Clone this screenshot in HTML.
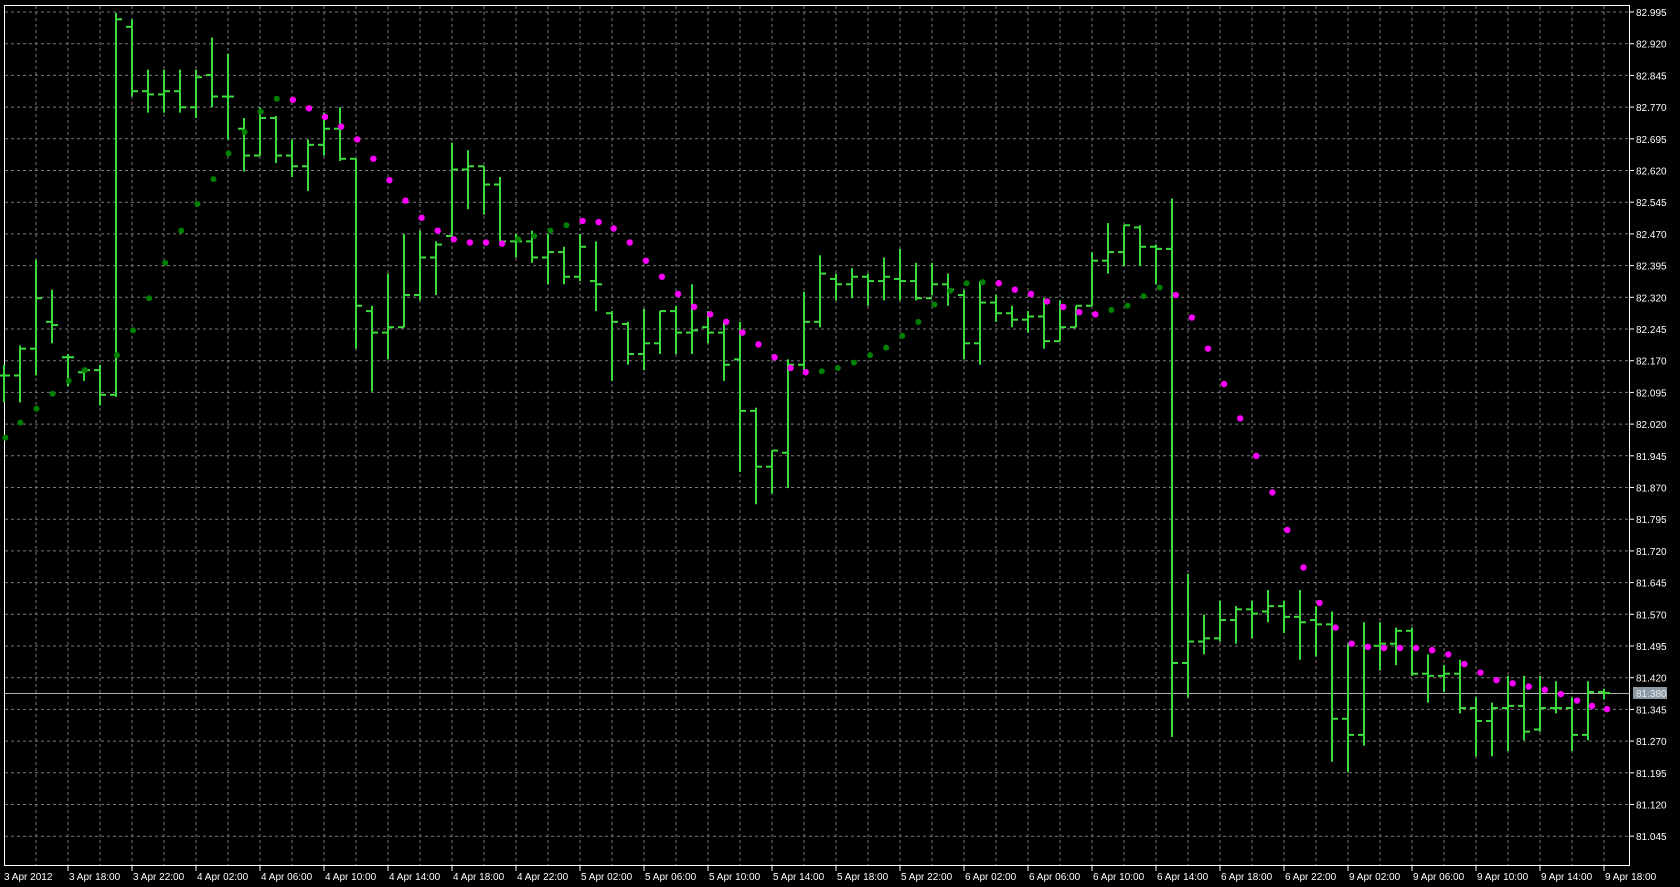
<!DOCTYPE html>
<html><head><meta charset="utf-8"><style>
html,body{margin:0;padding:0;background:#000;width:1680px;height:887px;overflow:hidden}
svg{display:block}
text{font-family:"Liberation Sans",sans-serif;font-size:10px;fill:#fff}
</style></head><body>
<svg id="c" width="1680" height="887" xmlns="http://www.w3.org/2000/svg"></svg>
<script>
var s=document.getElementById('c'),h='';
var K=1.0728;
// grid
for(var k=0;k<=26;k++){var y=12+31.7*k;h+='<line x1="5" y1="'+y+'" x2="1630" y2="'+y+'" stroke="#7a7a7a" stroke-dasharray="3,3"/>';
var p=(82.995-0.075*k).toFixed(3);h+='<line x1="1630" y1="'+y+'" x2="1634" y2="'+y+'" stroke="#fff"/><text x="1636" y="'+(y+4)+'">'+p+'</text>';}
for(var x=36;x<1630;x+=32){h+='<line x1="'+x+'" y1="6" x2="'+x+'" y2="866" stroke="#7a7a7a" stroke-dasharray="3,3"/>';}
var L=['3 Apr 18:00','3 Apr 22:00','4 Apr 02:00','4 Apr 06:00','4 Apr 10:00','4 Apr 14:00','4 Apr 18:00','4 Apr 22:00','5 Apr 02:00','5 Apr 06:00','5 Apr 10:00','5 Apr 14:00','5 Apr 18:00','5 Apr 22:00','6 Apr 02:00','6 Apr 06:00','6 Apr 10:00','6 Apr 14:00','6 Apr 18:00','6 Apr 22:00','9 Apr 02:00','9 Apr 06:00','9 Apr 10:00','9 Apr 14:00','9 Apr 18:00'];
h+='<text x="4" y="880">3 Apr 2012</text>';
for(var i=0;i<L.length;i++){var x=68+64*i;h+='<line x1="'+x+'" y1="866" x2="'+x+'" y2="871" stroke="#fff"/><text x="'+(x+1)+'" y="880">'+L[i]+'</text>';}
h+='<rect x="4.5" y="5.5" width="1625" height="860" fill="none" stroke="#fff"/>';
// price line
h+='<line x1="5" y1="693.5" x2="1630" y2="693.5" stroke="#b0b0b0"/><rect x="1633" y="687" width="34" height="12" fill="#8c9aa6"/><text x="1636" y="697" style="fill:#e8e8e8">81.380</text>';
var B=[[340,375,350,350],[322,375,350,325],[242,350,325,278],[270,320,300,303],[330,360,333,333],[345,355,347,345],[340,378,345,368],[12,370,368,18],[18,90,25,85],[65,105,85,88],[65,105,88,85],[65,105,85,100],[65,110,100,72],[35,100,70,90],[50,130,90,90],[110,160,120,145],[100,145,145,110],[108,152,110,145],[130,165,145,155],[130,178,155,135],[105,145,135,120],[100,150,120,148],[148,325,148,285],[285,365,290,310],[255,335,310,305],[218,305,305,275],[215,280,275,240],[225,275,240,228],[133,220,220,158],[140,195,158,155],[155,200,155,172],[165,225,172,225],[218,240,225,225],[215,245,225,240],[218,265,240,235],[230,265,235,258],[218,262,258,230],[225,290,262,265],[290,355,292,300],[300,340,302,330],[288,345,330,320],[290,330,320,290],[285,330,290,310],[265,330,310,308],[290,320,305,310],[300,355,310,340],[300,440,335,383],[380,470,383,435],[420,460,435,420],[335,455,422,340],[272,345,340,300],[238,305,300,255],[255,280,260,265],[250,278,265,258],[255,285,258,262],[240,280,262,258],[232,280,260,262],[245,280,262,278],[245,275,278,265],[255,285,265,270],[270,335,275,320],[262,340,320,282],[275,300,282,292],[285,305,292,298],[290,310,298,295],[278,325,295,318],[280,318,318,305],[285,305,305,285],[235,285,285,243],[208,255,243,235],[210,248,235,210],[210,248,212,230],[228,265,230,232],[185,687,232,618],[535,650,618,598],[573,610,598,595],[560,598,595,578],[565,600,578,568],[560,595,568,572],[550,580,570,565],[560,590,565,575],[550,615,575,580],[565,612,578,582],[570,710,582,670],[600,720,670,685],[580,695,685,602],[580,625,602,600],[585,620,600,588],[585,630,588,628],[610,655,628,630],[620,645,630,628],[615,665,628,660],[650,705,660,672],[655,705,672,660],[630,700,660,658],[630,690,658,682],[630,682,680,660],[635,665,660,660],[650,700,660,685],[635,690,685,645],[642,652,645,646]];
for(var j=0;j<B.length;j++){var b=B[j],x=4+16*j;var hi=b[0]*K,lo=b[1]*K,o=b[2]*K,c=b[3]*K;
h+='<line x1="'+x+'" y1="'+hi+'" x2="'+x+'" y2="'+lo+'" stroke="#3ddc3d" stroke-width="2"/>';
h+='<line x1="'+(x-6)+'" y1="'+o+'" x2="'+x+'" y2="'+o+'" stroke="#3ddc3d" stroke-width="2"/>';
h+='<line x1="'+x+'" y1="'+c+'" x2="'+(x+6)+'" y2="'+c+'" stroke="#3ddc3d" stroke-width="2"/>';}
var G=[[5,408],[19,394],[34,381],[49,367],[64,355],[79,345],[109,331],[124,308],[139,278],[154,245],[169,215],[184,190],[199,167],[213,143],[228,123],[243,104],[258,92],[483,223],[498,220],[513,215],[528,210],[766,346],[781,343],[796,338],[811,331],[826,324],[841,313],[856,300],[871,284],[886,271],[901,264],[916,263],[1036,289],[1051,285],[1066,276],[1081,268]];
var M=[[273,93],[288,101],[303,109],[318,118],[333,130],[348,148],[363,168],[378,187],[393,203],[408,215],[423,223],[438,226],[453,226],[468,227],[543,206],[558,207],[572,213],[587,226],[602,243],[617,258],[632,274],[647,286],[662,293],[677,300],[692,310],[707,321],[722,333],[737,343],[751,347],[931,264],[946,270],[961,274],[976,281],[991,286],[1006,291],[1021,293],[1096,275],[1111,296],[1126,325],[1141,358],[1156,390],[1171,425],[1186,459],[1200,494],[1215,529],[1230,562],[1245,585],[1260,600],[1275,603],[1290,604],[1305,604],[1320,604],[1335,606],[1350,610],[1365,619],[1380,627],[1395,634],[1410,637],[1425,640],[1440,643],[1455,647],[1470,653],[1484,658],[1498,661]];
G.forEach(function(d){h+='<circle cx="'+d[0]*K+'" cy="'+d[1]*K+'" r="3" fill="#008000"/>';});
M.forEach(function(d){h+='<circle cx="'+d[0]*K+'" cy="'+d[1]*K+'" r="3.2" fill="#ff00ff"/>';});
s.innerHTML=h;
</script>
</body></html>
